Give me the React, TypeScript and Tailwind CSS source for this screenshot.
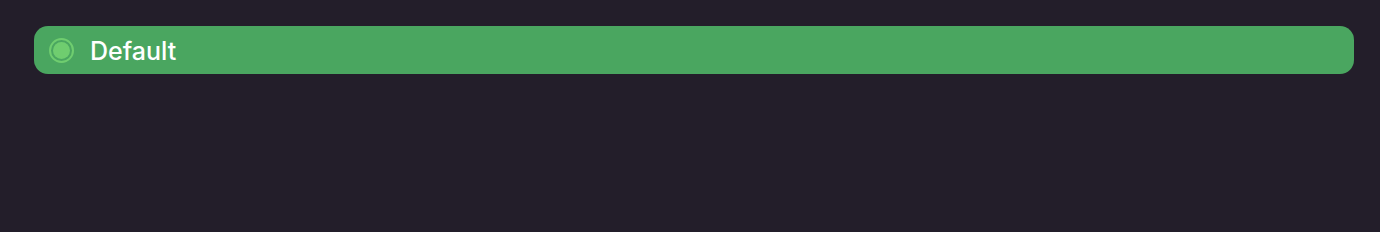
export default function App() {
  return (
    <div className="min-h-[232px] w-full bg-[#231e2a] pl-[34px] pr-[26px] pt-[26px]" style={{ fontFamily: 'Inter, "Noto Sans", sans-serif' }}>
      <div className="flex h-12 items-center gap-4 rounded-[14px] bg-[#4aa660] pl-[15px] pr-4">
        <span className="flex h-[25px] w-[25px] shrink-0 items-center justify-center rounded-full border-2 border-[#6fcd6f]">
          <span className="h-[17px] w-[17px] rounded-full bg-[#6fcd6f]" />
        </span>
        <span className="pt-[2px] text-[25px] font-medium leading-none text-white">Default</span>
      </div>
    </div>
  );
}
